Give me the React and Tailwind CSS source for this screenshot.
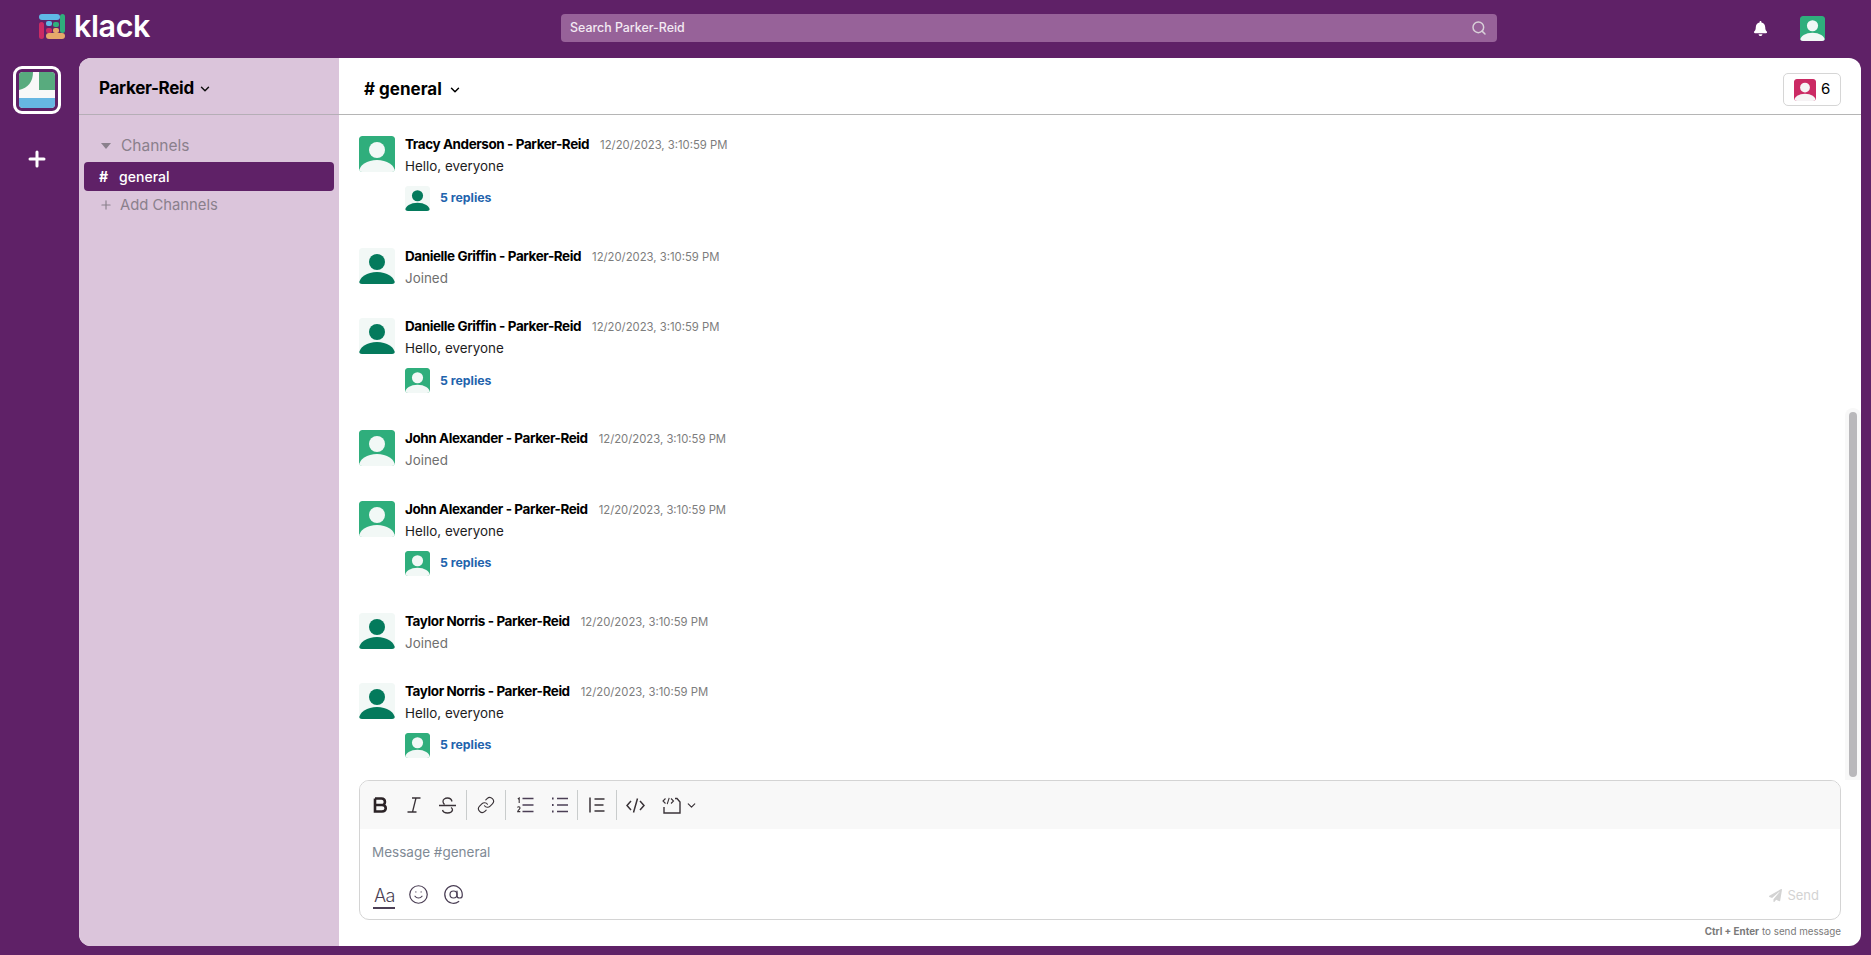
import React from "react";
import { ChevronDown, Search, Plus, Link, Smile, AtSign } from "lucide-react";
import { FaBell, FaPaperPlane } from "react-icons/fa";

const Avatar = ({ variant = "green", size = 36 }) => {
  const c = {
    green: ["#2fae7c", "#f2f8f6"],
    dark: ["#f2f8f6", "#047a5c"],
    pink: ["#cb2a64", "#f6f3f5"],
  }[variant];
  return (
    <svg width={size} height={size} viewBox="0 0 36 36" className="shrink-0 rounded-[3px]">
      <rect width="36" height="36" rx="3" fill={c[0]} />
      <circle cx="18" cy="14" r="8" fill={c[1]} />
      <ellipse cx="18" cy="36" rx="18" ry="12" fill={c[1]} />
    </svg>
  );
};

const Logo = () => (
  <svg width="28" height="27" viewBox="0 0 28 27" className="shrink-0">
    <rect x="0" y="1" width="21" height="6" rx="3" fill="#5fb8e6" />
    <rect x="0" y="9" width="5" height="17" rx="2.5" fill="#cb2a64" />
    <rect x="7" y="8" width="6" height="5" rx="2" fill="#5fb8e6" />
    <rect x="21" y="1" width="5" height="19" rx="2.5" fill="#2fae7c" />
    <rect x="14" y="9" width="6" height="5" rx="2" fill="#2fae7c" />
    <rect x="7" y="15" width="6" height="5" rx="2" fill="#cb2a64" />
    <rect x="14" y="15" width="6" height="5" rx="2" fill="#e6a86a" />
    <rect x="7" y="20" width="19" height="6" rx="3" fill="#e6a86a" />
  </svg>
);

const Workspace = () => (
  <div className="w-[48px] h-[48px] rounded-[9px] border-[3px] border-white p-[3px]">
    <svg width="36" height="36" viewBox="0 0 36 36" className="rounded-[4px]">
      <rect width="36" height="36" fill="#f8f8f8" />
      <path d="M0 0H14C14 10 9 16 0 18Z" fill="#58ab7e" />
      <rect x="20" y="0" width="16" height="18" fill="#58ab7e" />
      <rect x="0" y="26" width="36" height="10" fill="#66b6e2" />
    </svg>
  </div>
);

const Msg = ({ name, variant, body, joined, reply }) => (
  <div className={`flex gap-[10px] ${joined ? "h-[70.4px]" : "h-[112px]"}`}>
    <Avatar variant={variant} />
    <div className="flex flex-col min-w-0">
      <div className="flex items-center h-[16px] gap-[11px]">
        <span className="text-[13.5px] font-bold text-black tracking-[-0.42px]">{name} - Parker-Reid</span>
        <span className="text-[11.3px] text-[#7d7d7d] mt-[3px]">12/20/2023, 3:10:59 PM</span>
      </div>
      <div className={`text-[13.4px] mt-[4px] leading-[20px] ${joined ? "text-[#6f6f6f]" : "text-[#1d1c1d]"}`}>{body}</div>
      {!joined && (
        <div className="flex items-center gap-[10px] mt-[10px]">
          <Avatar variant={reply} size={25} />
          <span className="text-[12.3px] font-bold text-[#1f64ad]">5 replies</span>
        </div>
      )}
    </div>
  </div>
);

const Sep = () => <div className="w-px h-[30px] bg-[#c9cccc] shrink-0" />;

const ToolBtn = ({ children, className = "w-[34px]" }) => (
  <div className={`flex items-center justify-center h-[30px] text-[#3a3338] shrink-0 ${className}`}>{children}</div>
);

const messages = [
  { name: "Tracy Anderson", variant: "green", body: "Hello, everyone", reply: "dark" },
  { name: "Danielle Griffin", variant: "dark", body: "Joined", joined: true },
  { name: "Danielle Griffin", variant: "dark", body: "Hello, everyone", reply: "green" },
  { name: "John Alexander", variant: "green", body: "Joined", joined: true },
  { name: "John Alexander", variant: "green", body: "Hello, everyone", reply: "green" },
  { name: "Taylor Norris", variant: "dark", body: "Joined", joined: true },
  { name: "Taylor Norris", variant: "dark", body: "Hello, everyone", reply: "green" },
];

export default function App() {
  return (
    <div className="w-[1871px] h-[955px] overflow-hidden bg-[#5f2167] flex flex-col font-['Inter',sans-serif]">
      <header className="h-[58px] shrink-0 flex items-center">
        <div className="w-[561px] pl-[39px] flex items-center gap-[7px] shrink-0 pb-[5px]">
          <Logo />
          <span className="text-[30.5px] font-semibold leading-none text-white tracking-[-0.4px]">klack</span>
        </div>
        <div className="w-[936px] h-[28px] mb-[2px] rounded-[4px] bg-[#976299] flex items-center justify-between pl-[9px] pr-[10px] shrink-0">
          <span className="text-[12.4px] font-medium text-[#f3eaf3]">Search Parker-Reid</span>
          <Search size={16} strokeWidth={2.2} className="text-[#d8d0d8]" />
        </div>
        <div className="flex-1 flex items-center justify-end pr-[46px] gap-[32px] mb-[2px]">
          <FaBell size={15} className="text-white" />
          <Avatar variant="green" size={25} />
        </div>
      </header>
      <div className="flex-1 flex min-h-0 pr-[10px] pb-[9px]">
        <aside className="w-[79px] shrink-0 flex flex-col items-center pr-[5px] pt-[8px] gap-[33px]">
          <Workspace />
          <Plus size={24} strokeWidth={3} className="text-white" />
        </aside>
        <div className="flex-1 flex min-w-0 rounded-[12px] overflow-hidden bg-white">
          <nav className="w-[260px] shrink-0 bg-[#dbc5db] flex flex-col">
            <div className="h-[57px] shrink-0 border-b border-[#b5aeb6] flex items-center pl-[20px] pt-[6px] gap-[4px] text-[#111]">
              <span className="text-[17px] font-bold tracking-[-0.3px] text-black">Parker-Reid</span>
              <ChevronDown size={14} strokeWidth={2.5} />
            </div>
            <div className="px-[5px] pt-[19px] flex flex-col">
              <div className="flex items-center h-[24px] pl-[17px] gap-[10px] text-[#8a808c]">
                <svg width="10" height="6" viewBox="0 0 10 6" className="shrink-0"><path d="M0 0H10L5 6Z" fill="#8a808c" /></svg>
                <span className="text-[15.5px]">Channels</span>
              </div>
              <div className="flex items-center h-[29px] mt-[4px] pb-[1px] rounded-[4px] bg-[#5f2167] pl-[15px] gap-[11px] text-white">
                <span className="text-[14px] font-bold">#</span>
                <span className="text-[14px] font-medium">general</span>
              </div>
              <div className="flex items-center h-[24px] mt-[2px] pl-[15px] gap-[7px] text-[#8a808c]">
                <Plus size={14} />
                <span className="text-[14.8px]">Add Channels</span>
              </div>
            </div>
          </nav>
          <main className="flex-1 min-w-0 flex flex-col relative">
            <div className="h-[57px] shrink-0 border-b border-[#b5b5b5] flex items-center justify-between pl-[25px] pr-[20px] pt-[7px]">
              <div className="flex items-center gap-[6px] text-black">
                <span className="text-[17px] font-bold"># general</span>
                <ChevronDown size={14} strokeWidth={2.5} />
              </div>
              <div className="w-[58px] h-[33px] border border-[#d6d6d6] rounded-[5px] flex items-center pl-[10px] gap-[5px]">
                <Avatar variant="pink" size={22} />
                <span className="text-[15px] text-black">6</span>
              </div>
            </div>
            <div className="flex-1 min-h-0 overflow-hidden pl-[20px] pt-[21px] relative">
              {messages.map((m, i) => (
                <Msg key={i} {...m} />
              ))}
              <div className="absolute right-0 top-[293px] bottom-0 w-[16px] rounded-t-[8px] bg-[#f8f8f8] px-[4px] pt-[4px]">
                <div className="w-[8px] h-[365px] rounded-[4px] bg-[#b9b8bb]" />
              </div>
            </div>
            <div className="mx-[20px] h-[140px] shrink-0 border border-[#d4d4d4] rounded-[10px] overflow-hidden flex flex-col">
              <div className="h-[48px] shrink-0 bg-[#f8f8f8] flex items-center pl-[3px]">
                <ToolBtn>
                  <svg width="15" height="16" viewBox="0 0 15 16" fill="none" stroke="#2b2326" strokeWidth="2.6">
                    <path d="M2 1.5V14.5H9C14 14.5 14 8 9 8H2M9 8C13 8 13 1.5 8.5 1.5H2" />
                  </svg>
                </ToolBtn>
                <ToolBtn>
                  <svg width="14" height="16" viewBox="0 0 14 16" fill="none" stroke="#3a3338" strokeWidth="1.3">
                    <path d="M5 1H13.5M9 1L5.5 15M0.5 15H9.5" />
                  </svg>
                </ToolBtn>
                <ToolBtn className="w-[35px] pr-[3px]">
                  <svg width="17" height="17" viewBox="0 0 17 17" fill="none" stroke="#3a3338" strokeWidth="1.3">
                    <path d="M13 4.5C12.5 2 10.5 1 8.5 1C6 1 4 2.5 4 4.5C4 5.5 4.5 6.5 5.5 7.5M0 8.5H17M12 10.5C13 11 13.5 12 13.5 13C13 15 11 16 8.5 16C6 16 4 15 3.5 13" />
                  </svg>
                </ToolBtn>
                <Sep />
                <ToolBtn className="w-[38px]"><Link size={18} strokeWidth={1.5} /></ToolBtn>
                <Sep />
                <ToolBtn className="w-[38px]">
                  <svg width="17" height="16" viewBox="0 0 17 16" fill="none" stroke="currentColor" strokeWidth="1.5">
                    <path d="M5.5 1.5H16.5M5.5 8H16.5M5.5 14.5H16.5" stroke="#4b3f55" />
                    <path d="M0.8 2L2.2 1V6M0.5 10.5C1 9.3 3 9.5 3 11C3 12.3 1 13 0.7 14.6H3.3" strokeWidth="1.1" />
                  </svg>
                </ToolBtn>
                <ToolBtn className="w-[33px] pr-[2px]">
                  <svg width="16" height="16" viewBox="0 0 16 16" fill="none" stroke="#4b3f55" strokeWidth="1.5">
                    <path d="M5 1.5H16M5 8H16M5 14.5H16" />
                    <path d="M0 1.5H1.6M0 8H1.6M0 14.5H1.6" strokeWidth="1.8" />
                  </svg>
                </ToolBtn>
                <Sep />
                <ToolBtn className="w-[38px]">
                  <svg width="16" height="16" viewBox="0 0 16 16" fill="none" stroke="currentColor" strokeWidth="1.5">
                    <path d="M1 0.5V15.5M5.5 2H15.5M5.5 8H14.5M5.5 14H15.5" />
                  </svg>
                </ToolBtn>
                <Sep />
                <ToolBtn className="w-[37px]">
                  <svg width="19" height="15" viewBox="0 0 19 15" fill="none" stroke="currentColor" strokeWidth="1.5">
                    <path d="M5 3L1 7.5L5 12M14 3L18 7.5L14 12M11.5 0.5L7.5 14.5" />
                  </svg>
                </ToolBtn>
                <ToolBtn className="w-[34px]">
                  <svg width="19" height="17" viewBox="0 0 19 17" fill="none" stroke="currentColor" strokeWidth="1.4">
                    <path d="M2 10V16H18V5L15 1.5H13" />
                    <path d="M3.5 1.5L1 4L3.5 6.5M9 1.5L11.5 4L9 6.5M7.2 0.8L5.2 7.2" strokeWidth="1.1" />
                  </svg>
                </ToolBtn>
                <ChevronDown size={13} strokeWidth={2.2} className="text-[#3a3338] -ml-[3px]" />
              </div>
              <div className="flex-1 flex flex-col justify-between pl-[12px] pr-[11px] pt-[14px] pb-[9px]">
                <span className="text-[13.5px] text-[#7f8a95] leading-[18px]">Message #general</span>
                <div className="flex items-center justify-between">
                  <div className="flex items-center gap-[13px] -mt-[1px] ml-[1px]">
                    <span className="text-[18px] leading-[22px] border-b-2 border-[#4b3f55] text-[#4b3f55] font-light tracking-[-0.5px] pl-[1px]">Aa</span>
                    <Smile size={21} strokeWidth={1.4} className="text-[#4b3f55] -mt-[5px]" />
                    <AtSign size={21} strokeWidth={1.4} className="text-[#4b3f55] -mt-[5px] ml-[1px]" />
                  </div>
                  <div className="flex items-center gap-[5px] pr-[10px] pb-[5px] text-[#d3d3d3]">
                    <FaPaperPlane size={13} />
                    <span className="text-[13px]">Send</span>
                  </div>
                </div>
              </div>
            </div>
            <div className="h-[26px] shrink-0 pr-[20px] pb-[2px] flex items-center justify-end text-[9.8px] text-[#7a7a7a]">
              <span className="font-bold mr-[3px]">Ctrl + Enter</span> to send message
            </div>
          </main>
        </div>
      </div>
    </div>
  );
}
